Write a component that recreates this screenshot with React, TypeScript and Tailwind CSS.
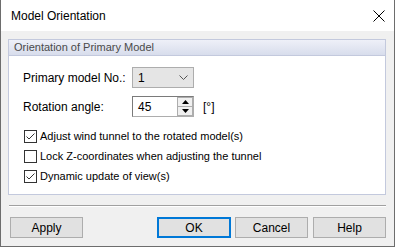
import { useState } from 'react';

function Check({ on }: { on: boolean }) {
  return (
    <span className="w-[13px] h-[13px] border border-[#333333] bg-white flex items-center justify-center shrink-0">
      {on && (
        <svg width="11" height="11" viewBox="0 0 11 11">
          <path d="M1.5 5.5 L4 8 L9.5 2.5" fill="none" stroke="#333333" strokeWidth="1" />
        </svg>
      )}
    </span>
  );
}

export default function App() {
  const [checks, setChecks] = useState([true, false, true]);
  const labels = [
    'Adjust wind tunnel to the rotated model(s)',
    'Lock Z-coordinates when adjusting the tunnel',
    'Dynamic update of view(s)',
  ];

  return (
    <div className="w-[395px] h-[247px] flex flex-col text-[12px] text-black font-['Liberation_Sans',Arial,sans-serif] whitespace-nowrap select-none">
      <div className="h-[31px] bg-white flex items-center justify-between pl-[10px] pr-[9px] border-x border-[#6d6d6d]">
        <span className="text-[12px]">Model Orientation</span>
        <svg width="12" height="12" viewBox="0 0 12 12">
          <path d="M0.5 0.5 L11.5 11.5 M11.5 0.5 L0.5 11.5" stroke="#000" strokeWidth="1" />
        </svg>
      </div>

      <div className="flex-1 bg-[#f0f0f0] border-x border-b border-[#6d6d6d] flex flex-col pt-[8px] pl-[7px] pr-[8px]">
        <div className="h-[156px] border border-[#c3c9dd] bg-white flex flex-col">
          <div className="h-[16px] border-b border-[#c3c9dd] bg-gradient-to-b from-[#eef0f8] to-[#d8ddec] flex items-center pl-[5px] text-[11px] text-[#4a4a4a] leading-none">
            Orientation of Primary Model
          </div>
          <div className="flex flex-col pl-[14px] pt-[11px]">
            <div className="flex items-center h-[21px]">
              <span className="w-[109px]">Primary model No.:</span>
              <div className="w-[62px] h-[21px] border border-[#adadad] bg-[#e5e5e5] flex items-center justify-between pl-[5px] pr-[5px]">
                <span>1</span>
                <svg width="9" height="6" viewBox="0 0 9 6">
                  <path d="M0.5 0.5 L4.5 4.5 L8.5 0.5" fill="none" stroke="#555" strokeWidth="1" />
                </svg>
              </div>
            </div>
            <div className="flex items-center h-[21px] mt-[8px]">
              <span className="w-[109px]">Rotation angle:</span>
              <div className="w-[62px] h-[21px] border border-[#7a7a7a] border-r-[#adadad] border-b-[#adadad] bg-white flex items-center">
                <span className="flex-1 pl-[5px]">45</span>
                <div className="w-[16px] h-[19px] flex flex-col border border-[#adadad] bg-[#f0f0f0]">
                  <div className="flex-1 flex items-center justify-center border-b border-[#adadad]">
                    <svg width="7" height="4" viewBox="0 0 7 4"><path d="M0 4 L3.5 0 L7 4 Z" fill="#000" /></svg>
                  </div>
                  <div className="flex-1 flex items-center justify-center">
                    <svg width="7" height="4" viewBox="0 0 7 4"><path d="M0 0 L3.5 4 L7 0 Z" fill="#000" /></svg>
                  </div>
                </div>
              </div>
              <span className="ml-[9px]">[°]</span>
            </div>

            <div className="flex flex-col mt-[12px] pl-[1px] gap-[6px]">
              {labels.map((l, i) => (
                <label
                  key={l}
                  className="flex items-center gap-[3px] h-[14px] text-[11px]"
                  onClick={() => setChecks(checks.map((c, j) => (j === i ? !c : c)))}
                >
                  <Check on={checks[i]} />
                  <span>{l}</span>
                </label>
              ))}
            </div>
          </div>
        </div>

        <div className="mt-[10px] ml-[1px] border-t border-[#a0a0a0] border-b border-b-white" />

        <div className="flex items-center mt-[10px] pl-[2px]">
          <button className="w-[73px] h-[21px] border border-[#adadad] bg-[#e1e1e1]">Apply</button>
          <div className="flex-1" />
          <button className="w-[74px] h-[21px] border-2 border-[#0078d7] bg-[#e1e1e1]">OK</button>
          <button className="w-[73px] h-[21px] border border-[#adadad] bg-[#e1e1e1] ml-[4px]">Cancel</button>
          <button className="w-[73px] h-[21px] border border-[#adadad] bg-[#e1e1e1] ml-[5px]">Help</button>
        </div>
      </div>
    </div>
  );
}
